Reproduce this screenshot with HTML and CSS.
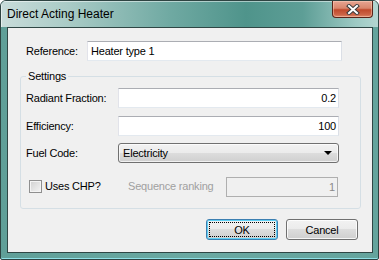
FILE: index.html
```html
<!DOCTYPE html>
<html lang="en">
<head>
    <meta charset="UTF-8">
    <title>Direct Acting Heater</title>
    <link rel="stylesheet" href="styles.css">
</head>
<body>

<div class="window">
    <div class="titlebar">
        <span class="title">Direct Acting Heater</span>
        <span class="close-btn">
            <svg width="14" height="11" viewBox="0 0 14 11">
                <path d="M3 2 L11 9 M11 2 L3 9" stroke="#3b3b3b" stroke-width="4" stroke-linecap="square"/>
                <path d="M3 2 L11 9 M11 2 L3 9" stroke="#ffffff" stroke-width="2" stroke-linecap="square"/>
            </svg>
        </span>
    </div>

    <div class="client">
        <div class="ref-row">
            <label class="ref-label">Reference:</label>
            <div class="textbox ref-box">Heater type 1</div>
        </div>

        <fieldset class="group">
            <legend>Settings</legend>
            <div class="form-grid">
                <label>Radiant Fraction:</label>
                <div class="textbox num">0.2</div>
                <label>Efficiency:</label>
                <div class="textbox num">100</div>
                <label>Fuel Code:</label>
                <div class="combo">
                    <span>Electricity</span>
                    <span class="arrow"></span>
                </div>
            </div>
            <div class="chp-row">
                <div class="chp">
                    <span class="checkbox"></span>
                    <span>Uses CHP?</span>
                </div>
                <span class="seq-label">Sequence ranking</span>
                <div class="textbox num disabled">1</div>
            </div>
        </fieldset>

        <div class="buttons">
            <button class="btn default">OK</button>
            <button class="btn">Cancel</button>
        </div>
    </div>
</div>

</body>
</html>
```

FILE: styles.css
```css
body {
    margin: 0;
    padding: 0;
    font-family: "Liberation Sans", Arial, sans-serif;
    font-size: 11px;
    letter-spacing: -0.2px;
    color: #000000;
    background-color: #ffffff;
}

.window {
    width: 379px;
    height: 260px;
    box-sizing: border-box;
    border: 1px solid #2e4442;
    border-radius: 6px 6px 2px 2px;
    background: linear-gradient(to right, #5f9f98 0%, #6aa9a2 50%, #64a49d 100%);
    box-shadow: inset 0 -1px 0 #8fe0e6;
    overflow: hidden;
}

.titlebar {
    height: 26px;
    display: flex;
    background: linear-gradient(to right, #c8dcda 0%, #a9cbc6 18%, #6fa9a2 45%, #4f948b 65%, #5d9e96 80%, #9dc9c3 94%, #b3d6d1 100%);
    box-shadow: inset 1px 1px 0 rgba(255, 255, 255, 0.5);
}

.title {
    padding-left: 6px;
    line-height: 27px;
    font-size: 12px;
    letter-spacing: 0;
    color: #000000;
}

.close-btn {
    margin-left: auto;
    margin-right: 5px;
    width: 41px;
    height: 17px;
    box-sizing: border-box;
    border: 1px solid #5a2419;
    border-top: none;
    border-radius: 0 0 4px 4px;
    background: linear-gradient(to bottom, #e7a592 0%, #d9866c 45%, #c04a2c 55%, #cc6446 85%, #e08a6c 100%);
    box-shadow: inset 0 0 0 1px rgba(255, 220, 200, 0.45);
    display: flex;
    align-items: center;
    justify-content: center;
}

.close-btn svg {
    display: block;
}

.client {
    height: 226px;
    margin: 0 5px 0 6px;
    box-sizing: border-box;
    border: 1px solid #2f4745;
    background-color: #f0f0f0;
    padding-top: 13px;
}

.ref-row {
    display: flex;
    align-items: center;
    padding-left: 18px;
    height: 20px;
}

.ref-label {
    width: 61px;
}

.textbox {
    height: 20px;
    box-sizing: border-box;
    border: 1px solid;
    border-color: #abadb3 #dbdfe6 #e3e9ef #e2e3ea;
    background-color: #ffffff;
    padding: 0 3px;
    line-height: 18px;
    white-space: nowrap;
}

.ref-box {
    width: 255px;
}

.num {
    text-align: right;
    padding-right: 2px;
}

.textbox.disabled {
    background-color: #f0f0f0;
    border-color: #afafaf;
    color: #8a8a8a;
    width: 112px;
}

.group {
    margin: 9px 11px 0 12px;
    padding: 5px 0 11px 5px;
    border: 1px solid #d5dfe5;
    border-radius: 3px;
    min-width: 0;
}

.group legend {
    padding: 0 2px;
    line-height: 13px;
}

.form-grid {
    display: grid;
    grid-template-columns: 92px 221px;
    grid-template-rows: 28px 27px 20px;
    align-items: start;
}

.form-grid label {
    line-height: 20px;
}

.combo {
    height: 20px;
    box-sizing: border-box;
    border: 1px solid #707070;
    border-radius: 3px;
    background: linear-gradient(to bottom, #f2f2f2 0%, #ebebeb 50%, #dddddd 50%, #cfcfcf 100%);
    box-shadow: inset 0 0 0 1px rgba(255, 255, 255, 0.7);
    display: flex;
    align-items: center;
    padding: 0 6px 0 4px;
}

.combo .arrow {
    margin-left: auto;
    width: 0;
    height: 0;
    border-left: 4px solid transparent;
    border-right: 4px solid transparent;
    border-top: 4px solid #000000;
}

.chp-row {
    display: flex;
    align-items: center;
    margin-top: 14px;
    height: 20px;
}

.chp {
    width: 102px;
    display: flex;
    align-items: center;
    gap: 3px;
}

.checkbox {
    width: 13px;
    height: 13px;
    box-sizing: border-box;
    margin-left: 3px;
    margin-top: -2px;
    border: 1px solid #8f8f8f;
    background: linear-gradient(135deg, #d0d0d0 0%, #e6e6e6 60%, #f4f4f4 100%);
    box-shadow: inset 0 0 0 1px #f4f4f4;
}

.chp span:last-child {
    margin-top: -2px;
}

.seq-label {
    width: 98px;
    color: #a0a0a0;
    margin-top: -2px;
}

.buttons {
    display: flex;
    justify-content: flex-end;
    gap: 8px;
    margin-top: 10px;
    padding-right: 14px;
}

.btn {
    width: 72px;
    height: 21px;
    box-sizing: border-box;
    font-family: "Liberation Sans", Arial, sans-serif;
    font-size: 11px;
    letter-spacing: -0.2px;
    color: #000000;
    border: 1px solid #707070;
    border-radius: 3px;
    background: linear-gradient(to bottom, #f2f2f2 0%, #ebebeb 50%, #dddddd 50%, #cfcfcf 100%);
    box-shadow: inset 0 0 0 1px rgba(255, 255, 255, 0.8);
    padding: 0;
}

.btn.default {
    border-color: #3c7fb1;
    box-shadow: inset 0 0 0 1px #5ed0f5;
    outline: 1px dotted #000000;
    outline-offset: -4px;
}
```
